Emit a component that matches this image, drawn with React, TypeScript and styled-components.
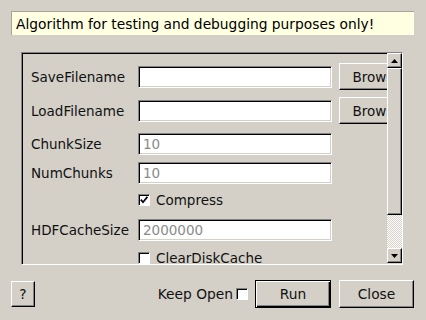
import styled, { createGlobalStyle } from 'styled-components';

const GlobalStyle = createGlobalStyle`
  body {
    margin: 0;
    background: #d4d0c8;
    font-family: "DejaVu Sans", Verdana, sans-serif;
    font-size: 13.5px;
    color: #000;
  }
`;

const Window = styled.div`
  width: 426px;
  height: 320px;
  box-sizing: border-box;
  padding: 11px 12px 0 11px;
  display: flex;
  flex-direction: column;
  overflow: hidden;
`;

const InfoBar = styled.div`
  height: 24px;
  box-sizing: border-box;
  background: #ffffe1;
  border-top: 1px solid #a8a49c;
  border-left: 1px solid #a8a49c;
  padding-left: 4px;
  display: flex;
  align-items: center;
  white-space: nowrap;
  font-size: 13.8px;
`;

const Frame = styled.div`
  margin: 17px 11px 0 10px;
  height: 213px;
  box-sizing: border-box;
  border: 1px solid;
  border-color: #848284 #fff #fff #848284;
  box-shadow: inset 1px 1px 0 #000;
  display: flex;
`;

const Content = styled.div`
  flex: 1;
  overflow: hidden;
  padding: 8px 0 0 9px;
  display: flex;
  flex-direction: column;
`;

interface RowProps {
  $h: number;
}

const Row = styled.div<RowProps>`
  flex: none;
  height: ${(p) => p.$h}px;
  display: grid;
  grid-template-columns: 100px 194px 76px;
  column-gap: 7px;
  align-items: center;
  white-space: nowrap;
`;

const Label = styled.span`
  color: #111;
`;

const Field = styled.div`
  height: 22px;
  box-sizing: border-box;
  background: #fff;
  border: 1px solid;
  border-color: #848284 #fff #fff #848284;
  box-shadow: inset 1px 1px 0 #000, inset -1px -1px 0 #d4d0c8;
  padding-left: 4px;
  display: flex;
  align-items: center;
  color: #8a8a8a;
`;

interface ButtonProps {
  $w: number;
  $h: number;
  $focus?: boolean;
}

const Button = styled.div<ButtonProps>`
  width: ${(p) => p.$w}px;
  height: ${(p) => p.$h}px;
  box-sizing: border-box;
  flex: none;
  background: #d4d0c8;
  border: 1px solid;
  border-color: ${(p) => (p.$focus ? '#000' : '#fff #000 #000 #fff')};
  box-shadow: ${(p) =>
    p.$focus
      ? 'inset 1px 1px 0 #fff, inset -1px -1px 0 #000, inset -2px -2px 0 #848284'
      : 'inset -1px -1px 0 #848284'};
  display: flex;
  align-items: center;
  justify-content: center;
  color: #111;
`;

const CheckRow = styled.div`
  display: flex;
  align-items: center;
  gap: 6px;
`;

const Box = styled.div`
  width: 12px;
  height: 12px;
  box-sizing: border-box;
  flex: none;
  background: #fff;
  border: 1px solid;
  border-color: #848284 #fff #fff #848284;
  box-shadow: inset 1px 1px 0 #000;
  display: flex;
  align-items: center;
  justify-content: center;
`;

const ScrollBar = styled.div`
  width: 15px;
  flex: none;
  display: flex;
  flex-direction: column;
  padding-bottom: 1px;
`;

const Arrow = styled.div`
  height: 15px;
  box-sizing: border-box;
  flex: none;
  border: 1px solid;
  border-color: #fff #000 #000 #fff;
  box-shadow: inset -1px -1px 0 #848284;
  display: flex;
  align-items: center;
  justify-content: center;
`;

const Thumb = styled.div`
  height: 147px;
  box-sizing: border-box;
  flex: none;
  border: 1px solid;
  border-color: #fff #000 #000 #fff;
  box-shadow: inset -1px -1px 0 #848284;
`;

const Trough = styled.div`
  flex: 1;
  background: repeating-conic-gradient(#fff 0 25%, #d4d0c8 0 50%) 0 0 / 2px 2px;
`;

const BottomBar = styled.div`
  margin-top: 15px;
  height: 28px;
  display: flex;
  align-items: center;
  font-size: 13.8px;
`;

const Spacer = styled.div`
  flex: 1;
`;

const Gap = styled.div`
  width: 8px;
  flex: none;
`;

const KeepOpen = styled.div`
  display: flex;
  align-items: center;
  gap: 3px;
  margin-right: 7px;
`;

const Check = () => (
  <svg width="8" height="8" viewBox="0 0 8 8">
    <path d="M0.8 3.6 L3 6.2 L7.4 0.8" fill="none" stroke="#000" strokeWidth="1.7" />
  </svg>
);

const Tri = ({ up }: { up: boolean }) => (
  <svg width="7" height="4" viewBox="0 0 7 4">
    <path d={up ? 'M0 4 L3.5 0 L7 4 Z' : 'M0 0 L3.5 4 L7 0 Z'} fill="#000" />
  </svg>
);

const App = () => {
  return (
    <>
      <GlobalStyle />
      <Window>
        <InfoBar>Algorithm for testing and debugging purposes only!</InfoBar>
        <Frame>
          <Content>
            <Row $h={31}>
              <Label>SaveFilename</Label>
              <Field />
              <Button $w={76} $h={27}>Browse</Button>
            </Row>
            <Row $h={37}>
              <Label>LoadFilename</Label>
              <Field />
              <Button $w={76} $h={27}>Browse</Button>
            </Row>
            <Row $h={29}>
              <Label>ChunkSize</Label>
              <Field>10</Field>
            </Row>
            <Row $h={29}>
              <Label>NumChunks</Label>
              <Field>10</Field>
            </Row>
            <Row $h={26}>
              <span />
              <CheckRow>
                <Box>
                  <Check />
                </Box>
                <Label>Compress</Label>
              </CheckRow>
            </Row>
            <Row $h={33}>
              <Label>HDFCacheSize</Label>
              <Field>2000000</Field>
            </Row>
            <Row $h={24}>
              <span />
              <CheckRow>
                <Box />
                <Label>ClearDiskCache</Label>
              </CheckRow>
            </Row>
          </Content>
          <ScrollBar>
            <Arrow>
              <Tri up />
            </Arrow>
            <Thumb />
            <Trough />
            <Arrow>
              <Tri up={false} />
            </Arrow>
          </ScrollBar>
        </Frame>
        <BottomBar>
          <Button $w={24} $h={26}>?</Button>
          <Spacer />
          <KeepOpen>
            <Label>Keep Open</Label>
            <Box />
          </KeepOpen>
          <Button $w={76} $h={28} $focus>Run</Button>
          <Gap />
          <Button $w={75} $h={28}>Close</Button>
        </BottomBar>
      </Window>
    </>
  );
};

export default App;
